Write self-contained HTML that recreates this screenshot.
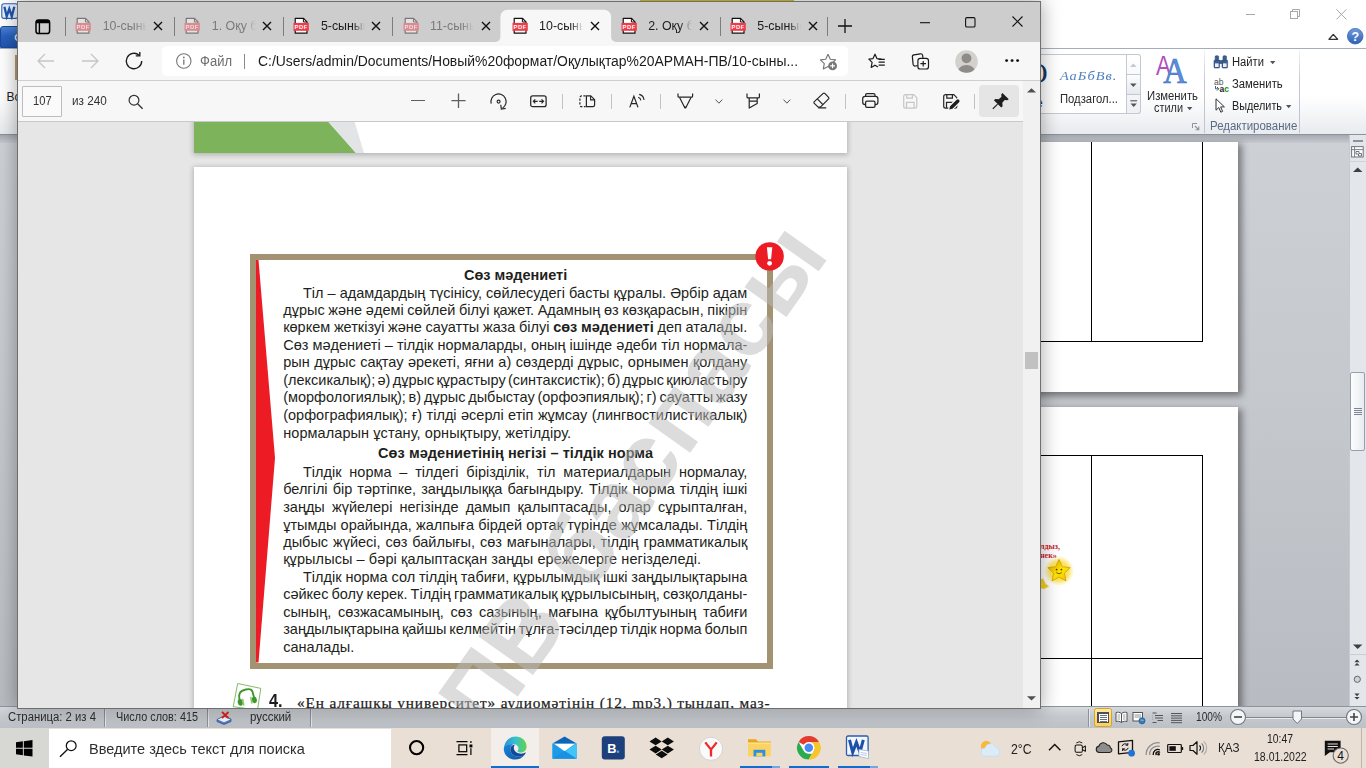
<!DOCTYPE html>
<html><head><meta charset="utf-8"><title>screen</title>
<style>
*{box-sizing:border-box;margin:0;padding:0}
html,body{width:1366px;height:768px;overflow:hidden;background:#fff;font-family:"Liberation Sans",sans-serif}
.a{position:absolute}
.t{position:absolute;white-space:nowrap;line-height:1;display:inline-block}
svg{position:absolute;overflow:visible}
/* ---------- WORD ---------- */
#word{position:absolute;left:0;top:0;width:1366px;height:728px;background:#fff;overflow:hidden}
#wdoc{position:absolute;left:0;top:142px;width:1349px;height:565px;background:linear-gradient(#cdd0d5,#c5c8cd 45%,#b8bbc1)}
.wpage{position:absolute;background:#fff;box-shadow:3px 3px 7px 1px rgba(0,0,0,.42)}
#wstatus{position:absolute;left:0;top:706px;width:1366px;height:22px;background:linear-gradient(#d6dade,#c5c9ce 45%,#bcc1c7);border-top:1px solid #8e949c}
/* ---------- EDGE ---------- */
#edge{position:absolute;left:17px;top:1px;width:1024px;height:708px;background:#e6e6e6;border:1px solid #6e6e6e;box-shadow:0 0 18px 1px rgba(0,0,0,.33);overflow:hidden}
#etabs{position:absolute;left:18px;top:2px;width:1022px;height:40px;background:#cdcdcd}
#eaddr{position:absolute;left:18px;top:42px;width:1022px;height:39px;background:#f7f7f7;border-bottom:1px solid #cfcfcf}
#epdfbar{position:absolute;left:18px;top:81px;width:1005px;height:41px;background:#f7f7f7;border-bottom:1px solid #c9c9c9}
#escroll{position:absolute;left:1023px;top:81px;width:17px;height:627px;background:#f1f1f1}
#eview{position:absolute;left:0;top:0;width:1023px;height:708px;background:#e6e6e6;overflow:hidden;clip-path:inset(122px 0 0 18px)}
.pg{background:#fff;box-shadow:0 1px 5px 1px rgba(0,0,0,.22)}
.l{font-size:14.5px;line-height:20px;height:20px;color:#231f20}
.tt{top:19.3px;font-size:12.4px;line-height:14px;width:44px;overflow:hidden;-webkit-mask-image:linear-gradient(90deg,#000 72%,transparent 100%);mask-image:linear-gradient(90deg,#000 72%,transparent 100%)}
#wm{left:488.65px;top:654.5px;font-size:97px;font-weight:bold;color:rgba(185,185,185,.5);transform:rotate(-54.7deg);transform-origin:0 82.1px;word-spacing:7px}
/* ---------- TASKBAR ---------- */
#task{position:absolute;left:0;top:728px;width:1366px;height:40px;background:#eadfd5}
</style></head><body>

<div id="word">
  <div id="wdoc"></div>
<div class="a" style="left:640px;top:0;width:154px;height:1.3px;background:#d8c422"></div>
<svg width="18" height="17" style="left:1px;top:2.5px"><rect x=".8" y=".8" width="16" height="14.6" rx="2.2" fill="#eaf1fb" stroke="#2f62b3" stroke-width="1.1"></rect><path d="M3.4 3.8l2.3 9.6 2.6-7.6 2.5 7.6 2.5-9.6" fill="none" stroke="#1e56b0" stroke-width="2.3"></path></svg>
<div class="a" style="left:0;top:25.5px;width:30px;height:22.8px;background:linear-gradient(#4c83d6,#2a62c0 45%,#1f55b1);border-radius:3px 3px 0 0;border:1px solid #1b4a9c"></div>
<div class="t" style="left:14px;top:31px;font-size:13px;color:#fff">Ф</div>
<div class="a" style="left:1245.5px;top:13.8px;width:9.8px;height:1px;background:#a8a8a8"></div>
<svg width="12" height="12" style="left:1290px;top:8.8px"><rect x=".5" y="2.5" width="7" height="7" fill="#fff" stroke="#a8a8a8" stroke-width="1"></rect><path d="M2.5 2.5V.5h7v7h-2" fill="none" stroke="#a8a8a8" stroke-width="1"></path></svg>
<svg width="12" height="12" style="left:1335.5px;top:8.8px"><path d="M.4 .4l10 10M10.4 .4l-10 10" stroke="#a8a8a8" stroke-width="1"></path></svg>
<svg width="12" height="8" style="left:1328px;top:32.8px"><path d="M1 6.3L5.3 1.4l4.3 4.9z" fill="#fff" stroke="#333" stroke-width="1.3" stroke-linejoin="round"></path></svg>
<svg width="17" height="17" style="left:1347px;top:28.2px"><defs><linearGradient id="hg" x1="0" y1="0" x2="0" y2="1"><stop offset="0" stop-color="#6f9bdc"></stop><stop offset="1" stop-color="#2f62b6"></stop></linearGradient></defs><circle cx="8.2" cy="8.2" r="7.8" fill="url(#hg)" stroke="#2c5aa6" stroke-width=".7"></circle><text x="8.2" y="12.6" font-family="Liberation Sans" font-weight="bold" font-size="12.5" fill="#fff" text-anchor="middle">?</text></svg>
<div class="a" style="left:0;top:48px;width:1366px;height:86.5px;background:linear-gradient(#fff 0,#fff 55%,#e8ebef 100%);border-top:1px solid #a4adbb;border-bottom:1px solid #8d929a"></div>
<div class="a" style="left:15.3px;top:55px;width:4px;height:25px;background:#b99b6b"></div>
<div class="t" style="left:6.5px;top:91px;font-size:12px;color:#222">Вс</div>
<div class="a" style="left:1000px;top:54px;width:141px;height:60px;background:#fff;border:1px solid #c3c9d3;border-radius:0 3px 3px 0"></div>
<div class="a" style="left:1126px;top:54px;width:15px;height:60px;border:1px solid #c3c9d3;border-radius:0 3px 3px 0;background:linear-gradient(#fff,#eef0f4)"></div>
<div class="a" style="left:1126px;top:74px;width:15px;height:20.5px;border:1px solid #c3c9d3;background:linear-gradient(#fdfdfe,#e6e9ee)"></div>
<svg width="7" height="5" style="left:1130px;top:62.5px"><path d="M0 4L3.3 .5 6.6 4z" fill="#c5c9cf"></path></svg>
<svg width="7" height="5" style="left:1130px;top:82.5px"><path d="M0 .5L3.3 4 6.6 .5z" fill="#555"></path></svg>
<svg width="8" height="9" style="left:1129.5px;top:99.5px"><path d="M.3 .8h6.8" stroke="#555" stroke-width="1.1"></path><path d="M.5 3.4L3.7 7 6.9 3.4z" fill="#555"></path></svg>
<div class="t" style="left:1026px;top:58px;font-family:'Liberation Serif',serif;font-size:30px;color:#17365d">О</div>
<div class="t" style="left:1036px;top:97px;font-size:12px;color:#17365d">е</div>
<div class="t" style="left: 1059.5px; top: 67px; font-family: &quot;Liberation Serif&quot;, serif; font-style: italic; font-size: 13.5px; line-height: 18px; color: rgb(79, 129, 189); letter-spacing: 1px; transform-origin: left center; transform: scaleX(1.0642);">АаБбВв.</div>
<div class="t" style="left: 1059.5px; top: 91.5px; font-size: 12px; line-height: 14px; color: rgb(42, 42, 42); transform-origin: left center; transform: scaleX(0.9393);">Подзагол...</div>
<svg width="34" height="32" style="left:1156px;top:53px"><text x="0" y="22" font-family="Liberation Sans" font-size="27" fill="#b24fbe" transform="translate(0 0) scale(.82 1)">A</text><text x="0" y="30" font-family="Liberation Serif" font-size="36" fill="#5b8fdc" stroke="#3f72c4" stroke-width=".7" transform="translate(7.300 0) scale(.9 1)">A</text></svg>
<div class="t" style="left: 1146.9px; top: 88.5px; font-size: 12.5px; line-height: 14px; color: rgb(42, 42, 42); transform-origin: left center; transform: scaleX(0.9044);">Изменить</div>
<div class="t" style="left: 1153.7px; top: 101.3px; font-size: 12.5px; line-height: 14px; color: rgb(42, 42, 42); transform-origin: left center; transform: scaleX(0.8726);">стили</div>
<svg width="6" height="4" style="left:1186.5px;top:107px"><path d="M0 0h5.4L2.7 3.2z" fill="#555"></path></svg>
<svg width="8" height="8" style="left:1192px;top:123px"><path d="M.5 5V.5H5" fill="none" stroke="#8b939f" stroke-width="1"></path><path d="M3 3l3.6 3.6M6.8 3.6v3.2H3.6" fill="none" stroke="#8b939f" stroke-width="1.1"></path></svg>
<div class="a" style="left:1204.0px;top:50px;width:1px;height:83px;background:linear-gradient(rgba(190,197,208,.2),#bfc6d0 40%,#bfc6d0)"></div>
<div class="a" style="left:1298.8px;top:50px;width:1px;height:83px;background:linear-gradient(rgba(190,197,208,.2),#bfc6d0 40%,#bfc6d0)"></div>
<svg width="16" height="14" style="left:1213px;top:55px"><g fill="#3d5f8f" stroke="#2b4a78" stroke-width=".6"><rect x="1" y="5" width="5.6" height="8" rx="1"></rect><rect x="9" y="5" width="5.6" height="8" rx="1"></rect><rect x="2.2" y=".8" width="3.4" height="4.6" rx=".8"></rect><rect x="10" y=".8" width="3.4" height="4.6" rx=".8"></rect><rect x="6.4" y="5.6" width="2.8" height="3"></rect></g><rect x="2" y="8.4" width="3.6" height="3.6" fill="#e9eef6"></rect><rect x="10" y="8.4" width="3.6" height="3.6" fill="#e9eef6"></rect></svg>
<div class="t" style="left: 1232.2px; top: 55px; font-size: 12.5px; line-height: 14px; color: rgb(34, 34, 34); transform-origin: left center; transform: scaleX(0.8971);">Найти</div>
<svg width="6" height="4" style="left:1269.6px;top:60.5px"><path d="M0 0h5.4L2.7 3.2z" fill="#555"></path></svg>
<svg width="18" height="14" style="left:1212.5px;top:77.5px"><text x="1" y="6.5" font-family="Liberation Sans" font-size="8.5" fill="#555">ab</text><text x="6.5" y="13.6" font-family="Liberation Sans" font-weight="bold" font-size="8.5" fill="#222">a<tspan fill="#1d8a1d">c</tspan></text><path d="M2.5 8v2.8h3M4 9l1.8 1.8L4 12.6" fill="none" stroke="#3a5f9a" stroke-width="1"></path></svg>
<div class="t" style="left: 1232.2px; top: 77.2px; font-size: 12.5px; line-height: 14px; color: rgb(34, 34, 34); transform-origin: left center; transform: scaleX(0.9026);">Заменить</div>
<svg width="12" height="16" style="left:1215px;top:98px"><path d="M1 .8v11.4l2.8-2.6 2 4.6 1.8-.8-2-4.5h3.8z" fill="#fff" stroke="#333" stroke-width="1" stroke-linejoin="round"></path></svg>
<div class="t" style="left: 1232.2px; top: 99px; font-size: 12.5px; line-height: 14px; color: rgb(34, 34, 34); transform-origin: left center; transform: scaleX(0.867);">Выделить</div>
<svg width="6" height="4" style="left:1285.6px;top:104.5px"><path d="M0 0h5.4L2.7 3.2z" fill="#555"></path></svg>
<div class="t" style="left: 1209.6px; top: 118.6px; font-size: 12.5px; line-height: 14px; color: rgb(91, 107, 132); transform-origin: left center; transform: scaleX(0.9167);">Редактирование</div>
<div class="a" style="left:0;top:135px;width:1349px;height:8px;background:linear-gradient(#a6aab0,#c6cad0)"></div>
<div class="a wpage" style="left:900px;top:142px;width:337.6px;height:250px"></div>
<div class="a wpage" style="left:900px;top:407px;width:337.6px;height:310px"></div>
<div class="a" style="left:1091px;top:142px;width:1.3px;height:200px;background:#000"></div>
<div class="a" style="left:1091px;top:455.5px;width:1.3px;height:260px;background:#000"></div>
<div class="a" style="left:1202px;top:142px;width:1.3px;height:200px;background:#000"></div>
<div class="a" style="left:1202px;top:455.5px;width:1.3px;height:260px;background:#000"></div>
<div class="a" style="left:900px;top:340.8px;width:303.3px;height:1px;background:#000"></div>
<div class="a" style="left:900px;top:455.3px;width:303.3px;height:1px;background:#000"></div>
<div class="a" style="left:900px;top:657.6px;width:303.3px;height:1px;background:#000"></div>
<svg width="34" height="34" style="left:1042px;top:554px"><defs><linearGradient id="sf" x1="0" y1="0" x2="1" y2="1"><stop offset="0" stop-color="#d99a00"></stop><stop offset=".55" stop-color="#ffe600"></stop><stop offset="1" stop-color="#f0b400"></stop></linearGradient><radialGradient id="sg"><stop offset="0" stop-color="#fff6a0"></stop><stop offset=".6" stop-color="#fbe25a"></stop><stop offset="1" stop-color="#fbe25a" stop-opacity="0"></stop></radialGradient></defs><circle cx="17" cy="17" r="15" fill="url(#sg)"></circle><path d="M17 5.5l3.4 7.2 7.8 1-5.7 5.4 1.4 7.8L17 23.100l-6.900 3.800 1.400-7.800-5.700-5.400 7.800-1z" fill="url(#sf)" stroke="#c9920a" stroke-width=".7"></path><circle cx="14.6" cy="15.600" r=".9" fill="#5a3a00"></circle><circle cx="19.400" cy="15.600" r=".9" fill="#5a3a00"></circle><path d="M14.300 18.600q2.700 2.400 5.400 0" stroke="#5a3a00" stroke-width=".8" fill="none"></path></svg>
<svg width="14" height="14" style="left:1036px;top:577px"><path d="M1 3l6-1.500 2.500 5 3.500 3-5 2.500-4-1 1.500-4z" fill="#f6d21c"></path></svg>
<div class="t" style="left:1040px;top:542.500px;font-family:'Liberation Serif',serif;font-weight:bold;font-size:8px;color:#d0202a">лдыз,</div>
<div class="t" style="left:1040px;top:551.500px;font-family:'Liberation Serif',serif;font-weight:bold;font-size:8px;color:#d0202a">нек»</div>
<div class="a" style="left:1349px;top:135px;width:17px;height:572px;background:#e3e6ea;border-left:1px solid #c5cad1"></div>
<div class="a" style="left:1352.5px;top:140.3px;width:10px;height:1.6px;background:#8c929b"></div>
<svg width="14" height="13" style="left:1351px;top:145.5px"><rect x=".6" y=".6" width="11.6" height="10.4" fill="#fdfdfd" stroke="#6f7782" stroke-width="1"></rect><path d="M.6 3.6h11.600M3.600 .6v10.400" stroke="#6f7782" stroke-width=".9"></path><path d="M5 5.500h3v2h2.500v2.500h-3v-2H5z" fill="none" stroke="#555" stroke-width=".8"></path></svg>
<div class="a" style="left:1349px;top:160.5px;width:17px;height:1px;background:#cfd3d9"></div>
<svg width="10" height="6" style="left:1352.600px;top:167px"><path d="M0 5L4.700 .4 9.400 5z" fill="#3c3f44"></path></svg>
<div class="a" style="left:1349.500px;top:372px;width:15.500px;height:78.500px;background:linear-gradient(90deg,#fdfdfe,#e8ebef);border:1px solid #98a0ab;border-radius:2px"></div>
<div class="a" style="left:1354px;top:407.5px;width:7.500px;height:1px;background:#7c848f"></div>
<div class="a" style="left:1354px;top:409.7px;width:7.500px;height:1px;background:#7c848f"></div>
<div class="a" style="left:1354px;top:411.9px;width:7.500px;height:1px;background:#7c848f"></div>
<div class="a" style="left:1354px;top:414.1px;width:7.500px;height:1px;background:#7c848f"></div>
<svg width="10" height="6" style="left:1352.600px;top:643.500px"><path d="M0 .4L4.700 5 9.400 .4z" fill="#3c3f44"></path></svg>
<div class="a" style="left:1349px;top:654px;width:17px;height:1px;background:#c9cdd4"></div><svg width="8" height="9" style="left:1354.300px;top:658.500px"><path d="M.4 3.300L3 .6 5.600 3.300zM.4 6.600L3 3.900 5.600 6.600z" fill="#3c3f44"></path></svg>
<svg width="9" height="9" style="left:1353px;top:675px"><circle cx="4.300" cy="4.300" r="3.100" fill="#cfd2d7" stroke="#666" stroke-width="1"></circle></svg>
<svg width="8" height="9" style="left:1354.300px;top:693px"><path d="M.4 .6L3 3.300 5.600 .6zM.4 3.900L3 6.600 5.600 3.900z" fill="#3c3f44"></path></svg>
  <div id="wstatus"></div>
<div class="t" style="left: 8.2px; top: 709.7px; font-size: 12.5px; line-height: 14px; color: rgb(45, 45, 45); transform-origin: left center; transform: scaleX(0.9056);">Страница: 2 из 4</div>
<div class="a" style="left:104.4px;top:709px;width:1px;height:18px;background:#8d939b"></div><div class="a" style="left:105.4px;top:709px;width:1px;height:18px;background:#e4e7eb"></div>
<div class="t" style="left: 115.7px; top: 709.7px; font-size: 12.5px; line-height: 14px; color: rgb(45, 45, 45); transform-origin: left center; transform: scaleX(0.8676);">Число слов: 415</div>
<div class="a" style="left:206.9px;top:709px;width:1px;height:18px;background:#8d939b"></div><div class="a" style="left:207.9px;top:709px;width:1px;height:18px;background:#e4e7eb"></div>
<svg width="18" height="14" style="left:216px;top:710.5px"><path d="M1 8.500l7-3.500 7 3v2.500l-7 3-7-3z" fill="#4d7cc4" stroke="#2b4f8e" stroke-width=".7"></path><path d="M1.500 8.500l6.500 2.700 6.500-2.700L8 5.700z" fill="#f3f6fb"></path><path d="M6 1l6.500 6M12.500 1L6 7" stroke="#e0251b" stroke-width="1.800"></path></svg>
<div class="t" style="left: 249.5px; top: 709.7px; font-size: 12.5px; line-height: 14px; color: rgb(45, 45, 45); transform-origin: left center; transform: scaleX(0.9207);">русский</div>
<div class="a" style="left:310.3px;top:709px;width:1px;height:18px;background:#8d939b"></div><div class="a" style="left:311.3px;top:709px;width:1px;height:18px;background:#e4e7eb"></div>
<div class="a" style="left:1087.8px;top:709px;width:1px;height:18px;background:#8d939b"></div><div class="a" style="left:1088.8px;top:709px;width:1px;height:18px;background:#e4e7eb"></div>
<div class="a" style="left:1093.500px;top:708.300px;width:18.300px;height:18.300px;background:linear-gradient(#fde9a4,#f9cf5f);border:1px solid #d9a327;border-radius:2.500px"></div>
<svg width="14" height="14" style="left:1097px;top:711px" shape-rendering="crispEdges"><rect x=".75" y="1.750" width="10.500" height="9.500" fill="#fff" stroke="#4a4f57" stroke-width="1.500"></rect><path d="M2.500 4h7M2.500 6h7M2.500 8h7M2.500 10h7" stroke="#6b7078" stroke-width="1"></path></svg>
<svg width="14" height="14" style="left:1115.0px;top:710.500px"><path d="M6.500 2.500C4.500 1 2.500 1 1 1.600v9c1.500-.6 3.500-.6 5.500.9 2-1.500 4-1.500 5.500-.9v-9C10.500 1 8.500 1 6.500 2.500zM6.500 2.500v9" fill="#fff" stroke="#555" stroke-width="1"></path><path d="M2.500 4h2.500M2.500 6h2.500M2.500 8h2.500M8 4h2.500M8 6h2.500M8 8h2.500" stroke="#777" stroke-width=".7"></path></svg>
<svg width="14" height="14" style="left:1132.1px;top:710.500px"><rect x="1" y="1.500" width="9.500" height="8.500" fill="#fff" stroke="#555" stroke-width="1"></rect><path d="M2.500 4h6.500M2.500 6h6.500" stroke="#777" stroke-width=".8"></path><circle cx="10" cy="9.800" r="3.100" fill="#3a78c9" stroke="#1d4f91" stroke-width=".6"></circle><path d="M8.500 9.200c1-.8 2 .8 3 0" stroke="#7fce5a" stroke-width="1.100" fill="none"></path></svg>
<svg width="14" height="14" style="left:1150.6px;top:710.500px"><path d="M1.500 2h4M4 4.500h8M4 7h8M6.500 9.500h5.500M1.500 11.500h4" stroke="#555" stroke-width="1"></path><path d="M1.500 4v5.500" stroke="#999" stroke-width=".7" stroke-dasharray="1 1"></path></svg>
<svg width="14" height="14" style="left:1169.5px;top:710.500px"><path d="M1 2.500h11M1 4.800h11M1 7.100h11M1 9.400h11M1 11.700h11" stroke="#555" stroke-width="1"></path></svg>
<div class="t" style="left: 1195.5px; top: 709.7px; font-size: 12.5px; line-height: 14px; color: rgb(45, 45, 45); transform-origin: left center; transform: scaleX(0.8129);">100%</div>
<div class="a" style="left:1246px;top:716.500px;width:100px;height:1px;background:#7e858e"></div><div class="a" style="left:1246px;top:717.500px;width:100px;height:1px;background:#e9ecef"></div>
<svg width="18" height="18" style="left:1228.500px;top:708.300px"><circle cx="9" cy="9" r="7.500" fill="#f4f5f7" stroke="#6f7782" stroke-width="1.100"></circle><path d="M5 9h8" stroke="#444" stroke-width="1.600"></path></svg>
<svg width="18" height="18" style="left:1344.500px;top:708.300px"><circle cx="9" cy="9" r="7.500" fill="#f4f5f7" stroke="#6f7782" stroke-width="1.100"></circle><path d="M5 9h8M9 5v8" stroke="#444" stroke-width="1.600"></path></svg>
<svg width="11" height="15" style="left:1291.600px;top:709.600px"><path d="M1 1h8.500v8L5.200 13.500 1 9z" fill="#f4f5f7" stroke="#6f7782" stroke-width="1"></path></svg>
</div>

<div id="edge"><div class="a" id="ep" style="left:-18px;top:-2px;width:1366px;height:768px">
  <!-- all children below are in PAGE coordinates -->
  <div id="eview">
    <!-- previous page bottom -->
    <div class="a pg" style="left:194px;top:100px;width:653px;height:53px">
      <svg width="653" height="53" style="left:0;top:0"><polygon points="0,0 115,0 162,53 0,53" fill="#7db35a"></polygon><polygon points="115,0 154,0 170,53 162,53" fill="#e3e4e6"></polygon></svg>
    </div>
    <!-- current page -->
    <div class="a pg" id="pgB" style="left:194px;top:167px;width:653px;height:600px"></div>
    <!-- info box -->
    <div class="a" style="left:250px;top:254px;width:523px;height:414.5px;border:6px solid #a39373;background:#fff"></div>
    <svg width="30" height="410" style="left:255px;top:259px"><polygon points="1,1 3.5,1 20,199 3.5,403.5 1,403.5" fill="#ed1c24"></polygon></svg>
<div class="t l" style="left: 464px; top: 265px; font-weight: bold; letter-spacing: -0.009px;">Сөз мәдениеті</div>
<div class="t l" style="left: 303px; top: 283px; word-spacing: -0.002px;">Тіл – адамдардың түсінісу, сөйлесудегі басты құралы. Әрбір адам</div>
<div class="t l" style="left: 283.2px; top: 300px; word-spacing: -0.336px;">дұрыс және әдемі сөйлей білуі қажет. Адамның өз көзқарасын, пікірін</div>
<div class="t l" style="left: 283.2px; top: 317px; word-spacing: -0.324px;">көркем жеткізуі және сауатты жаза білуі <b>сөз мәдениеті</b> деп аталады.</div>
<div class="t l" style="left: 283.2px; top: 335px; word-spacing: 0.112px;">Сөз мәдениеті – тілдік нормаларды, оның ішінде әдеби тіл нормала-</div>
<div class="t l" style="left: 283.2px; top: 352px; word-spacing: 0.478px;">рын дұрыс сақтау әрекеті, яғни а) сөздерді дұрыс, орнымен қолдану</div>
<div class="t l" style="left: 283.2px; top: 370px; word-spacing: -1.731px;">(лексикалық); ә) дұрыс құрастыру (синтаксистік); б) дұрыс қиюластыру</div>
<div class="t l" style="left: 283.2px; top: 387px; word-spacing: -1.225px;">(морфологиялық); в) дұрыс дыбыстау (орфоэпиялық); г) сауатты жазу</div>
<div class="t l" style="left: 283.2px; top: 405px; word-spacing: 0.433px;">(орфографиялық); ғ) тілді әсерлі етіп жұмсау (лингвостилистикалық)</div>
<div class="t l" style="left: 283.2px; top: 423px; letter-spacing: 0.078px;">нормаларын ұстану, орнықтыру, жетілдіру.</div>
<div class="t l" style="left: 378.1px; top: 443px; font-weight: bold; letter-spacing: 0.056px;">Сөз мәдениетінің негізі – тілдік норма</div>
<div class="t l" style="left: 303px; top: 462px; word-spacing: 3.773px;">Тілдік норма – тілдегі бірізділік, тіл материалдарын нормалау,</div>
<div class="t l" style="left: 283.2px; top: 479px; word-spacing: 1.046px;">белгілі бір тәртіпке, заңдылыққа бағындыру. Тілдік норма тілдің ішкі</div>
<div class="t l" style="left: 283.2px; top: 497px; word-spacing: 3.108px;">заңды жүйелері негізінде дамып қалыптасады, олар сұрыпталған,</div>
<div class="t l" style="left: 283.2px; top: 515px; word-spacing: 0.202px;">ұтымды орайында, жалпыға бірдей ортақ түрінде жұмсалады. Тілдің</div>
<div class="t l" style="left: 283.2px; top: 532px; word-spacing: 0.867px;">дыбыс жүйесі, сөз байлығы, сөз мағыналары, тілдің грамматикалық</div>
<div class="t l" style="left: 283.2px; top: 549px; letter-spacing: 0.083px;">құрылысы – бәрі қалыптасқан заңды ережелерге негізделеді.</div>
<div class="t l" style="left: 303px; top: 567px; word-spacing: -0.162px;">Тілдік норма сол тілдің табиғи, құрылымдық ішкі заңдылықтарына</div>
<div class="t l" style="left: 283.2px; top: 584px; word-spacing: -0.929px;">сәйкес болу керек. Тілдің грамматикалық құрылысының, сөзқолданы-</div>
<div class="t l" style="left: 283.2px; top: 602px; word-spacing: 2.566px;">сының, сөзжасамының, сөз сазының, мағына құбылтуының табиғи</div>
<div class="t l" style="left: 283.2px; top: 619px; word-spacing: -1.197px;">заңдылықтарына қайшы келмейтін тұлға-тәсілдер тілдік норма болып</div>
<div class="t l" style="left: 283.2px; top: 637px; letter-spacing: 0.019px;">саналады.</div>
    <!-- exercise 4 line -->
    <svg width="40" height="40" viewBox="225 676 40 40" style="left:225px;top:676px"><path d="M237.700 683.500L260.800 688.400L257.500 710L233.200 706.700z" fill="#fff" stroke="#72b655" stroke-width=".9" stroke-linejoin="round"></path><path d="M239.500 699.500C238.400 693.300 239.800 690.900 245.800 689.500C250.200 688.500 251.900 689.600 252.500 691.700L253.800 696.600" fill="none" stroke="#3f962b" stroke-width="1.900" stroke-linecap="round"></path><ellipse cx="240.300" cy="702.400" rx="2.600" ry="3.400" fill="#3f962b" transform="rotate(-10 240.300 702.400)"></ellipse><rect x="242.300" y="698.600" width="1.700" height="7.200" rx=".8" fill="#8fca7a" transform="rotate(-10 243 702)"></rect><ellipse cx="254.300" cy="699.900" rx="2.600" ry="3.300" fill="#3f962b" transform="rotate(-10 254.300 699.900)"></ellipse><rect x="250.500" y="696.700" width="1.700" height="7" rx=".8" fill="#8fca7a" transform="rotate(-10 251.300 700.200)"></rect></svg>
<div class="t" style="left: 268.9px; top: 691.4px; font-size: 19px; font-weight: bold; line-height: 19px; color: rgb(28, 28, 28); transform-origin: left center; transform: scaleX(0.8575);">4.</div>
<div class="t" style="left: 297px; top: 694.3px; font-family: &quot;Liberation Serif&quot;, serif; font-size: 15.3px; line-height: 18px; color: rgb(28, 28, 28); -webkit-text-stroke: 0.22px rgb(28, 28, 28); letter-spacing: 0.863px;">«Ең алғашқы университет» аудиомәтінін (12. mp3.) тыңдап, маз-</div>

    <!-- watermark -->
    <div class="t" id="wm">ПВ баспасы</div>
    <!-- red exclamation -->
    <svg width="30" height="30" style="left:754.5px;top:242px"><circle cx="14.6" cy="14.4" r="14.2" fill="#ed1c24"></circle><path d="M11.9 5.2h5.4l-1.2 12h-3z" fill="#fff"></path><circle cx="14.6" cy="21.3" r="2.4" fill="#fff"></circle></svg>
  </div>
  <div id="etabs"></div>
<svg width="130" height="34" style="left:492px;top:9px"><path d="M3.4 33 a5 5 0 0 0 5 -5 V7.8 a7 7 0 0 1 7 -7 H112.1 a7 7 0 0 1 7 7 V28 a5 5 0 0 0 5 5 z" fill="#f7f7f7"></path></svg>
<svg width="17" height="18" style="left:75.2px;top:17px"><g opacity=".45"><path d="M2.200 1.400h8.400l3.400 3.400v11.400H2.200z" fill="#fff" stroke="#111" stroke-width="1.200" stroke-linejoin="round"></path><path d="M10.400 1.600v3.400h3.400" fill="none" stroke="#111" stroke-width="1"></path><rect x="0.5" y="5.9" width="15.3" height="7.9" fill="#f03a47"></rect><text x="8.15" y="12.1" font-family="Liberation Sans" font-weight="bold" font-size="5.9" fill="#fff" text-anchor="middle" letter-spacing=".55">PDF</text></g></svg>
<div class="t tt" style="left:102.7px;color:#7a7a7a">10-сынып</div>
<svg width="10" height="10" style="left:153.2px;top:21.3px"><path d="M1 1l8 8M9 1l-8 8" stroke="#111" stroke-width="1.35" fill="none"></path></svg>
<svg width="17" height="18" style="left:184.3px;top:17px"><g opacity=".45"><path d="M2.200 1.400h8.400l3.400 3.400v11.400H2.200z" fill="#fff" stroke="#111" stroke-width="1.200" stroke-linejoin="round"></path><path d="M10.400 1.600v3.400h3.400" fill="none" stroke="#111" stroke-width="1"></path><rect x="0.5" y="5.9" width="15.3" height="7.9" fill="#f03a47"></rect><text x="8.15" y="12.1" font-family="Liberation Sans" font-weight="bold" font-size="5.9" fill="#fff" text-anchor="middle" letter-spacing=".55">PDF</text></g></svg>
<div class="t tt" style="left:211.8px;color:#7a7a7a">1. Оқу бөлім</div>
<svg width="10" height="10" style="left:262.3px;top:21.3px"><path d="M1 1l8 8M9 1l-8 8" stroke="#111" stroke-width="1.35" fill="none"></path></svg>
<svg width="17" height="18" style="left:293.4px;top:17px"><g><path d="M2.200 1.400h8.400l3.400 3.400v11.400H2.200z" fill="#fff" stroke="#111" stroke-width="1.200" stroke-linejoin="round"></path><path d="M10.400 1.600v3.400h3.400" fill="none" stroke="#111" stroke-width="1"></path><rect x="0.5" y="5.9" width="15.3" height="7.9" fill="#f03a47"></rect><text x="8.15" y="12.1" font-family="Liberation Sans" font-weight="bold" font-size="5.9" fill="#fff" text-anchor="middle" letter-spacing=".55">PDF</text></g></svg>
<div class="t tt" style="left:320.9px;color:#1b1b1b">5-сынып</div>
<svg width="10" height="10" style="left:371.4px;top:21.3px"><path d="M1 1l8 8M9 1l-8 8" stroke="#111" stroke-width="1.35" fill="none"></path></svg>
<svg width="17" height="18" style="left:402.5px;top:17px"><g opacity=".45"><path d="M2.200 1.400h8.400l3.400 3.400v11.400H2.200z" fill="#fff" stroke="#111" stroke-width="1.200" stroke-linejoin="round"></path><path d="M10.400 1.600v3.400h3.400" fill="none" stroke="#111" stroke-width="1"></path><rect x="0.5" y="5.9" width="15.3" height="7.9" fill="#f03a47"></rect><text x="8.15" y="12.1" font-family="Liberation Sans" font-weight="bold" font-size="5.9" fill="#fff" text-anchor="middle" letter-spacing=".55">PDF</text></g></svg>
<div class="t tt" style="left:430.0px;color:#7a7a7a">11-сынып</div>
<svg width="10" height="10" style="left:480.5px;top:21.3px"><path d="M1 1l8 8M9 1l-8 8" stroke="#111" stroke-width="1.35" fill="none"></path></svg>
<svg width="17" height="18" style="left:511.6px;top:17px"><g><path d="M2.200 1.400h8.400l3.400 3.400v11.400H2.200z" fill="#fff" stroke="#111" stroke-width="1.200" stroke-linejoin="round"></path><path d="M10.400 1.600v3.400h3.400" fill="none" stroke="#111" stroke-width="1"></path><rect x="0.5" y="5.9" width="15.3" height="7.9" fill="#f03a47"></rect><text x="8.15" y="12.1" font-family="Liberation Sans" font-weight="bold" font-size="5.9" fill="#fff" text-anchor="middle" letter-spacing=".55">PDF</text></g></svg>
<div class="t tt" style="left:539.1px;color:#1b1b1b">10-сынып</div>
<svg width="10" height="10" style="left:589.6px;top:21.3px"><path d="M1 1l8 8M9 1l-8 8" stroke="#111" stroke-width="1.35" fill="none"></path></svg>
<svg width="17" height="18" style="left:620.7px;top:17px"><g><path d="M2.200 1.400h8.400l3.400 3.400v11.400H2.200z" fill="#fff" stroke="#111" stroke-width="1.200" stroke-linejoin="round"></path><path d="M10.400 1.600v3.400h3.400" fill="none" stroke="#111" stroke-width="1"></path><rect x="0.5" y="5.9" width="15.3" height="7.9" fill="#f03a47"></rect><text x="8.15" y="12.1" font-family="Liberation Sans" font-weight="bold" font-size="5.9" fill="#fff" text-anchor="middle" letter-spacing=".55">PDF</text></g></svg>
<div class="t tt" style="left:648.2px;color:#1b1b1b">2. Оқу бөлім</div>
<svg width="10" height="10" style="left:698.7px;top:21.3px"><path d="M1 1l8 8M9 1l-8 8" stroke="#111" stroke-width="1.35" fill="none"></path></svg>
<svg width="17" height="18" style="left:729.8px;top:17px"><g><path d="M2.200 1.400h8.400l3.400 3.400v11.400H2.200z" fill="#fff" stroke="#111" stroke-width="1.200" stroke-linejoin="round"></path><path d="M10.400 1.600v3.400h3.400" fill="none" stroke="#111" stroke-width="1"></path><rect x="0.5" y="5.9" width="15.3" height="7.9" fill="#f03a47"></rect><text x="8.15" y="12.1" font-family="Liberation Sans" font-weight="bold" font-size="5.9" fill="#fff" text-anchor="middle" letter-spacing=".55">PDF</text></g></svg>
<div class="t tt" style="left:757.3px;color:#1b1b1b">5-сынып</div>
<svg width="10" height="10" style="left:807.8px;top:21.3px"><path d="M1 1l8 8M9 1l-8 8" stroke="#111" stroke-width="1.35" fill="none"></path></svg>
<div class="a" style="left:64.9px;top:17px;width:1px;height:19px;background:#7d7d7d"></div>
<div class="a" style="left:174.0px;top:17px;width:1px;height:19px;background:#7d7d7d"></div>
<div class="a" style="left:283.1px;top:17px;width:1px;height:19px;background:#7d7d7d"></div>
<div class="a" style="left:392.2px;top:17px;width:1px;height:19px;background:#7d7d7d"></div>
<div class="a" style="left:719.5px;top:17px;width:1px;height:19px;background:#7d7d7d"></div>
<div class="a" style="left:827.1px;top:17px;width:1px;height:19px;background:#7d7d7d"></div>
<svg width="16" height="16" style="left:34.5px;top:18.5px"><rect x="1" y="1" width="13.6" height="13.6" rx="2.6" fill="none" stroke="#000" stroke-width="1.5"></rect><path d="M1 4.2V3.2a2.3 2.3 0 0 1 2.3 -2.3h9a2.3 2.3 0 0 1 2.3 2.3v1z" fill="#000"></path><path d="M4.4 4v10.5" stroke="#000" stroke-width="1.4"></path></svg>
<svg width="16" height="16" style="left:837.3px;top:18.3px"><path d="M8 1v14M1 8h14" stroke="#111" stroke-width="1.3"></path></svg>
<svg width="12" height="2" style="left:920px;top:21.6px"><path d="M0 .7h10" stroke="#111" stroke-width="1.1"></path></svg>
<svg width="12" height="12" style="left:965.4px;top:16.9px"><rect x=".6" y=".6" width="9.4" height="9.4" rx="1.3" fill="none" stroke="#111" stroke-width="1.1"></rect></svg>
<svg width="12" height="12" style="left:1011.6px;top:16.4px"><path d="M.5 .5l10 10M10.5 .5l-10 10" stroke="#111" stroke-width="1.1"></path></svg>
  <div id="eaddr"></div>
<div class="a" style="left:162px;top:46px;width:686px;height:30px;background:#fff;border-radius:5px"></div>
<svg width="18" height="16" style="left:37px;top:52.5px"><path d="M17 8H1.2M8 1L1 8l7 7" stroke="#c6c6c6" stroke-width="1.3" fill="none"></path></svg>
<svg width="18" height="16" style="left:81px;top:52.5px"><path d="M1 8h15.8M10 1l7 7-7 7" stroke="#c6c6c6" stroke-width="1.3" fill="none"></path></svg>
<svg width="20" height="20" style="left:124px;top:51px"><path d="M17.7 10a7.7 7.7 0 1 1 -2.6 -5.75" stroke="#1b1b1b" stroke-width="1.35" fill="none"></path><path d="M15.8 .9v4h-4" stroke="#1b1b1b" stroke-width="1.35" fill="none"></path></svg>
<svg width="18" height="18" style="left:175px;top:52px"><circle cx="8.8" cy="9" r="7.2" fill="none" stroke="#767676" stroke-width="1.1"></circle><path d="M8.8 7.6v5.2" stroke="#767676" stroke-width="1.3"></path><circle cx="8.8" cy="5.4" r=".9" fill="#767676"></circle></svg>
<div class="t" style="left: 200.4px; top: 52.5px; font-size: 14px; line-height: 16px; color: rgb(110, 110, 110); transform-origin: left center; transform: scaleX(0.9296);">Файл</div>
<div class="a" style="left:244.3px;top:53.5px;width:1px;height:15px;background:#8a8a8a"></div>
<div class="t" style="left: 257.6px; top: 52.5px; font-size: 14px; line-height: 16px; color: rgb(27, 27, 27); transform-origin: left center; transform: scaleX(0.9944);">C:/Users/admin/Documents/Новый%20формат/Оқулықтар%20АРМАН-ПВ/10-сыны...</div>
<svg width="20" height="18" style="left:819px;top:52.5px"><path d="M9 1.3l2.3 4.9 5.3.7-3.9 3.7.3 1.2M9 1.3L6.7 6.2l-5.3.7 3.9 3.7-1 5.3L9 13.4l1.2.6" fill="none" stroke="#767676" stroke-width="1.15" stroke-linejoin="round"></path><circle cx="13.6" cy="12.9" r="4.4" fill="#767676"></circle><path d="M13.6 10.5v4.8M11.2 12.9h4.8" stroke="#fff" stroke-width="1.1"></path></svg>
<svg width="20" height="18" style="left:867.5px;top:52.5px"><path d="M7 1.2l1.9 4.4 4.2.5M7 1.2L5 5.6.9 6.2l3.2 3.2-.9 5 3.8-2.2 2.6 1.5" fill="none" stroke="#1b1b1b" stroke-width="1.2" stroke-linejoin="round" stroke-linecap="round"></path><path d="M10.6 6.3h6.2M10.6 9.2h6.2M10.6 12.1h6.2" stroke="#1b1b1b" stroke-width="1.2"></path></svg>
<svg width="20" height="18" style="left:911.5px;top:52.5px"><path d="M5.6 12.6l-2.2.4a2 2 0 0 1 -2.3 -1.6L.4 4.2A2 2 0 0 1 2 1.9L8.3.8a2 2 0 0 1 2.3 1.6l.4 2.4" fill="none" stroke="#1b1b1b" stroke-width="1.2"></path><rect x="5.9" y="5.4" width="10.6" height="10.6" rx="2.3" fill="#f7f7f7" stroke="#1b1b1b" stroke-width="1.2"></rect><path d="M11.2 7.9v5.6M8.4 10.7H14" stroke="#1b1b1b" stroke-width="1.2"></path></svg>
<svg width="24" height="24" style="left:954.5px;top:49.5px"><defs><clipPath id="pc"><circle cx="11.5" cy="11.5" r="11.3"></circle></clipPath></defs><circle cx="11.5" cy="11.5" r="11.3" fill="#d3d1ce"></circle><g clip-path="url(#pc)" fill="#8e8b88"><circle cx="11.5" cy="8.3" r="4.9"></circle><ellipse cx="11.5" cy="21.6" rx="8.6" ry="6.6"></ellipse></g></svg>
<svg width="16" height="4" style="left:1005px;top:59px"><circle cx="1.6" cy="1.6" r="1.45" fill="#111"></circle><circle cx="7.1" cy="1.6" r="1.45" fill="#111"></circle><circle cx="12.6" cy="1.6" r="1.45" fill="#111"></circle></svg>
  <div id="epdfbar"></div>
<div class="a" style="left:22px;top:85.5px;width:40px;height:31.5px;border:1px solid #bdbdbd;background:#fafafa;border-radius:1px"></div>
<div class="t" style="left: 33.2px; top: 94px; font-size: 12.5px; line-height: 15px; color: rgb(51, 51, 51); transform-origin: left center; transform: scaleX(0.8917);">107</div>
<div class="t" style="left: 72.3px; top: 94px; font-size: 12.5px; line-height: 15px; color: rgb(51, 51, 51); transform-origin: left center; transform: scaleX(0.9394);">из 240</div>
<svg width="16" height="16" style="left:127.5px;top:93.5px"><circle cx="6" cy="6.2" r="4.9" fill="none" stroke="#333" stroke-width="1.2"></circle><path d="M9.6 9.8l5 5" stroke="#333" stroke-width="1.3"></path></svg>
<div class="a" style="left:411px;top:100.2px;width:14.2px;height:1.3px;background:#5f5f5f"></div>
<svg width="16" height="16" style="left:450.5px;top:93.3px"><path d="M7.5 .5v14.4M.4 7.6h14.2" stroke="#5f5f5f" stroke-width="1.3"></path></svg>
<svg width="20" height="20" style="left:488.5px;top:91.5px"><path d="M2.2 11.6A7.6 7.6 0 1 1 13.6 16" fill="none" stroke="#262626" stroke-width="1.2"></path><path d="M16.6 16.9h-4.4v-4.3" fill="none" stroke="#262626" stroke-width="1.2" transform="rotate(-8 13 16)"></path><circle cx="9.6" cy="9.6" r="1.5" fill="none" stroke="#262626" stroke-width="1.1"></circle></svg>
<svg width="18" height="14" style="left:530px;top:94.5px"><rect x=".7" y=".9" width="15.4" height="10.8" rx="2" fill="none" stroke="#262626" stroke-width="1.25"></rect><path d="M3.4 6.3h9.8M5.3 4.3l-2 2 2 2M11.5 4.3l2 2-2 2" fill="none" stroke="#262626" stroke-width="1.15"></path><path d="M7.6 6.3h1.6" stroke="#f7f7f7" stroke-width="1.6"></path></svg>
<div class="a" style="left:561.8px;top:93.5px;width:1px;height:15.5px;background:#c2c2c2"></div>
<div class="a" style="left:610.6px;top:93.5px;width:1px;height:15.5px;background:#c2c2c2"></div>
<div class="a" style="left:659.7px;top:93.5px;width:1px;height:15.5px;background:#c2c2c2"></div>
<div class="a" style="left:844.8px;top:93.5px;width:1px;height:15.5px;background:#c2c2c2"></div>
<div class="a" style="left:973.8px;top:93.5px;width:1px;height:15.5px;background:#c2c2c2"></div>
<svg width="18" height="14" style="left:579px;top:94.5px"><path d="M6.6 .9H2.6A1.7 1.7 0 0 0 .9 2.6v7.4a1.7 1.7 0 0 0 1.7 1.7h4" fill="none" stroke="#262626" stroke-width="1.2" stroke-dasharray="2.2 1.5"></path><path d="M7.4 .9h4.4l3.8 3.8v5.3a1.7 1.7 0 0 1 -1.7 1.7H7.4z" fill="none" stroke="#262626" stroke-width="1.2" stroke-linejoin="round"></path><path d="M11.6 1v3.9h3.9" fill="none" stroke="#262626" stroke-width="1.1"></path></svg>
<svg width="18" height="16" style="left:628.5px;top:92.5px"><path d="M.8 14.4L4.9 3.3 9 14.4M2.3 10.6h5.2" fill="none" stroke="#262626" stroke-width="1.2"></path><path d="M9.2 4.2a3.6 3.6 0 0 1 2.6 3.2M10.2 1.4a6.4 6.4 0 0 1 4.8 5.6" fill="none" stroke="#262626" stroke-width="1.1"></path></svg>
<svg width="18" height="17" style="left:676.5px;top:92.8px"><path d="M1 .6v2.6a1 1 0 0 0 1 1h12.6a1 1 0 0 0 1 -1V.6" fill="none" stroke="#262626" stroke-width="1.2"></path><path d="M2.6 4.4l5.2 10.4h1l5.2-10.4" fill="none" stroke="#262626" stroke-width="1.2" stroke-linejoin="round"></path><path d="M7.1 13.4h2.4l-.7 1.6h-1z" fill="#262626"></path></svg>
<svg width="9" height="6" style="left:715px;top:98.8px"><path d="M.5 .6l3.4 3.6L7.3.6" fill="none" stroke="#555" stroke-width="1"></path></svg>
<svg width="16" height="17" style="left:745.5px;top:92.8px"><path d="M1 .6v3.3a1 1 0 0 0 1 1h10.4a1 1 0 0 0 1 -1V.6" fill="none" stroke="#262626" stroke-width="1.2"></path><path d="M3.2 5v3.2M11.2 5v3.2M3.2 8.2h8v2.2l-8 4.6z" fill="none" stroke="#262626" stroke-width="1.2" stroke-linejoin="round"></path></svg>
<svg width="9" height="6" style="left:783px;top:98.8px"><path d="M.5 .6l3.4 3.6L7.3.6" fill="none" stroke="#555" stroke-width="1"></path></svg>
<svg width="18" height="18" style="left:812.5px;top:92px"><path d="M1.3 9.6L10.2 1.4a1.2 1.2 0 0 1 1.6 0l3.8 3.9a1.2 1.2 0 0 1 0 1.6L7.4 15.2H5.2L1.3 11.3a1.2 1.2 0 0 1 0 -1.7z" fill="none" stroke="#262626" stroke-width="1.2" stroke-linejoin="round"></path><path d="M4.3 6.9l5.6 5.7M5.2 15.8h8" fill="none" stroke="#262626" stroke-width="1.2"></path></svg>
<svg width="18" height="16" style="left:861.6px;top:93.2px"><rect x="3.6" y=".7" width="9.4" height="4" rx="1.4" fill="none" stroke="#262626" stroke-width="1.25"></rect><rect x=".7" y="3.4" width="15.2" height="8.3" rx="2.4" fill="#f7f7f7" stroke="#262626" stroke-width="1.25"></rect><rect x="3.6" y="8" width="9.4" height="6.4" rx="1.4" fill="#f7f7f7" stroke="#262626" stroke-width="1.25"></rect></svg>
<svg width="18" height="16" style="left:902.8px;top:93.6px"><path d="M.7 2.6A1.9 1.9 0 0 1 2.6.7h8.2l3 3v8.6a1.9 1.9 0 0 1 -1.9 1.9H2.6A1.9 1.9 0 0 1 .7 12.3z" fill="none" stroke="#c6c6c6" stroke-width="1.2"></path><path d="M3.8.8v3.4h5.6V.8M3.5 14.1V8.4h7.6v5.7" fill="none" stroke="#c6c6c6" stroke-width="1.2"></path></svg>
<svg width="18" height="16" style="left:942.6px;top:93.6px"><path d="M.7 2.6A1.9 1.9 0 0 1 2.6.7h8.2l3 3v8.6a1.9 1.9 0 0 1 -1.9 1.9H2.6A1.9 1.9 0 0 1 .7 12.3z" fill="none" stroke="#262626" stroke-width="1.2"></path><path d="M3.8.8v3.4h5.6V.8M3.5 14.1V8.4h7.6v5.7" fill="none" stroke="#262626" stroke-width="1.2"></path><path d="M6.200 15.600l.900-3.300 6.600-6.500a1.700 1.700 0 0 1 2.400 2.400l-6.600 6.500z" fill="#f7f7f7" stroke="#f7f7f7" stroke-width="2.600"></path><path d="M6.200 15.600l.900-3.300 6.600-6.500a1.700 1.700 0 0 1 2.400 2.400l-6.600 6.500z" fill="#1d1d1d"></path></svg>
<div class="a" style="left:979.3px;top:85px;width:39.7px;height:31.8px;background:#e5e5e5;border-radius:4px"></div>
<svg width="18" height="18" style="left:991.5px;top:91.5px"><path d="M10.4.9l6.4 6.4-1.7 1-2.4-.3-2.4 2.8.3 3.4-1.4 1.4L1.9 8.3 3.3 6.9l3.4.3 2.8-2.4-.3-2.4z" fill="#1d1d1d"></path><path d="M5.6 12.1L.8 16.9" stroke="#1d1d1d" stroke-width="1.2"></path></svg>
  <div id="escroll"></div>
<svg width="10" height="6" style="left:1027px;top:88.2px"><path d="M0 4.6L4.5 .2 9 4.6z" fill="#505050"></path></svg>
<svg width="10" height="6" style="left:1027px;top:696px"><path d="M0 .2L4.5 4.6 9 .2z" fill="#505050"></path></svg>
<div class="a" style="left:1025px;top:352px;width:13px;height:17px;background:#c1c1c1"></div>
</div></div>

<div id="task"><div class="a" style="left:0;top:-728px;width:1366px;height:768px">
<div class="a" style="left:0;top:728px;width:48.600px;height:40px;background:#d7d8d4"></div>
<svg width="16.600" height="16.600" viewBox="0 0 17.400 17.400" style="left:15.700px;top:739.500px"><path d="M0 2.400L7.200 1.400V8.200H0zM8.200 1.250L17.300 0V8.200H8.200zM0 9.200H7.200V16L0 15zM8.200 9.200H17.300V17.400L8.200 16.150z" fill="#000"></path></svg>
<div class="a" style="left:48.600px;top:728.700px;width:342.900px;height:39.300px;background:#fff"></div>
<svg width="20" height="20" style="left:59px;top:738.500px"><circle cx="12.200" cy="6.700" r="4.900" fill="none" stroke="#111" stroke-width="1.250"></circle><path d="M8.700 10.200L1 17.800" stroke="#111" stroke-width="1.350"></path></svg>
<div class="t" style="left: 88.7px; top: 739.5px; font-size: 15px; line-height: 18px; color: rgb(46, 46, 46); transform-origin: left center; transform: scaleX(0.9678);">Введите здесь текст для поиска</div>
<svg width="18" height="18" style="left:407.500px;top:739.300px"><circle cx="8.600" cy="8.600" r="6.600" fill="none" stroke="#000" stroke-width="2.100"></circle></svg>
<svg width="20" height="18" style="left:455.500px;top:739.500px"><rect x="2.900" y="4.900" width="7.800" height="6.800" fill="none" stroke="#000" stroke-width="1.200"></rect><path d="M.5 1.700h11M.5 14.700h11" stroke="#000" stroke-width="1.200"></path><path d="M14.900 .9v2.200M14.900 8.300v6.800" stroke="#000" stroke-width="1.200"></path><rect x="13.500" y="4.500" width="2.900" height="2.900" fill="#000"></rect></svg>
<div class="a" style="left:490.800px;top:728px;width:48.600px;height:40px;background:#f4eeea"></div>
<div class="a" style="left:490.800px;top:765.500px;width:48.600px;height:2.500px;background:#0a6fd1"></div>
<svg width="24" height="24" viewBox="0 0 24 24" style="left:502.900px;top:735.800px"><defs><linearGradient id="eg1" x1="0" y1="0" x2="1" y2="0"><stop offset="0" stop-color="#2b8fdc"></stop><stop offset=".5" stop-color="#35c1d0"></stop><stop offset="1" stop-color="#63d345"></stop></linearGradient><linearGradient id="eg2" x1="0" y1="0" x2="1" y2="1"><stop offset="0" stop-color="#1b86dd"></stop><stop offset="1" stop-color="#0c55a5"></stop></linearGradient></defs>
<path d="M.9 12.500C1.300 5.500 6.500 .4 12.500 .4c6.500 0 11.100 4.900 11.100 10 0 3.600-2.600 6.100-6 6.100-2.100 0-3.200-.8-3.200-1.600 0-.7 1.100-1 1.100-2.500C15.500 10 13 7.900 10 7.900c-4.600 0-8.300 3.300-9.100 6.900z" fill="url(#eg1)"></path>
<path d="M.9 12.500C.4 18.500 5.800 23.600 12.300 23.600c3.600 0 6.900-1.700 8.900-4.300-1.500.9-3.400 1.500-5.200 1.500-5 0-8.700-3.400-8.700-7.500 0-2.500 1.500-4.500 3.100-5.300C5.400 7.700 1.200 10.800.9 12.500z" fill="url(#eg2)"></path>
<path d="M7.300 13.300c0 4.100 3.700 7.500 8.700 7.500 1.800 0 3.700-.6 5.200-1.500.8-1 1.400-2.100 1.700-3-1.300.9-3 1.400-4.600 1.400-4.300 0-7.500-2.500-7.500-5.900 0-1.400.5-2.500 1.200-3.300-2.700.1-4.700 2.100-4.700 4.800z" fill="#0d4a98"></path></svg>
<svg width="26" height="24" style="left:551.500px;top:736px"><path d="M.5 7.500L12.600 .6l12.100 6.900z" fill="#0f63b8"></path><rect x=".5" y="7.500" width="24.200" height="15.200" fill="#2aa3ec"></rect><path d="M2.500 7.900h20.200L12.600 15.200z" fill="#fff"></path><path d="M.5 7.500l12.100 8.300L.5 22.700z" fill="#1f9ae8"></path><path d="M24.700 7.500l-12.100 8.300 12.100 6.900z" fill="#3fc6f6"></path><path d="M.5 22.700l12.100-8 12.100 8z" fill="#1b8fe2"></path></svg>
<svg width="26" height="24" style="left:600.500px;top:736px"><rect x=".8" y=".3" width="23" height="23.200" rx="3" fill="#1d3f7c"></rect><text x="6.300" y="16.700" font-family="Liberation Sans" font-weight="bold" font-size="12.800" fill="#fff">B</text><circle cx="17" cy="15.800" r="1.300" fill="#3ab7ea"></circle></svg>
<svg width="26" height="22" style="left:649px;top:737px"><g fill="#0d0d0d"><path d="M6.600 .5l6.100 3.900-6.100 3.900L.5 4.400zM18.800 .5l6.100 3.900-6.100 3.900-6.100-3.900zM6.600 8.700l6.100 3.900-6.100 3.900L.5 12.600zM18.800 8.700l6.100 3.900-6.100 3.900-6.100-3.900zM6.700 17.500l6-3.800 6 3.800-6 3.800z"></path></g></svg>
<svg width="26" height="26" style="left:698px;top:735.500px"><circle cx="13" cy="12.800" r="11.600" fill="#fafafa" stroke="#d6d2cf" stroke-width="1"></circle><path d="M7.300 6.400l5.700 7.200v6.800M18.700 6.400L13 13.600" fill="none" stroke="#ee2a2a" stroke-width="2.300"></path></svg>
<svg width="26" height="22" style="left:747px;top:737px"><path d="M1 2.200h8l2 2.400h12.800v3H1z" fill="#e9a81b"></path><path d="M1 5.600h22.800V19.400H1z" fill="#fbd362"></path><path d="M1 5.600h22.800v1.600H1z" fill="#fce08a"></path><path d="M6.500 19.400v-6.600h11.800v6.600z" fill="#2c8fe3"></path><path d="M9.300 19.400v-3.600h6.200v3.600z" fill="#fbd362"></path></svg>
<svg width="26" height="26" style="left:796px;top:734.500px"><circle cx="12.800" cy="12.800" r="11.800" fill="#fff"></circle><path d="M12.800 1a11.800 11.800 0 0 1 10.220 5.900H12.800a5.900 5.900 0 0 0 -5.110 2.950L2.580 6.900A11.800 11.800 0 0 1 12.800 1z" fill="#e33b2e"></path><path d="M23.020 6.900a11.800 11.800 0 0 1 -10.220 17.700l5.110-8.850a5.900 5.900 0 0 0 0 -5.900z" fill="#f7c52f" transform="rotate(0 12.800 12.800)"></path><path d="M12.800 24.600A11.800 11.800 0 0 1 2.580 6.900l5.110 8.850a5.900 5.900 0 0 0 5.110 2.950l3.100 0z" fill="#2da94f"></path><path d="M17.910 15.750L12.800 24.600a11.800 11.800 0 0 0 10.220-17.700H12.800a5.900 5.900 0 0 1 5.110 8.850z" fill="#f7c52f"></path><circle cx="12.800" cy="12.800" r="5.300" fill="#fff"></circle><circle cx="12.800" cy="12.800" r="4.250" fill="#4a8af4"></circle></svg>
<svg width="26" height="26" style="left:844.500px;top:735px"><rect x="1.500" y="1" width="21.600" height="19.500" rx="1.500" fill="#f2f6fc" stroke="#2a5db0" stroke-width="1.300"></rect><path d="M4.500 4.800l3.200 12.400 3.700-9.800 3.600 9.800 3.300-12.400" fill="none" stroke="#1c4fa8" stroke-width="3"></path><path d="M14 14.500l9.500 1.500v7.500l-9.500-2z" fill="#fff" stroke="#9bb3d8" stroke-width=".8"></path><path d="M15.500 17.500l6.500 1M15.500 19.500l6.500 1" stroke="#9bb3d8" stroke-width=".7"></path></svg>
<div class="a" style="left:739.9px;top:765.500px;width:40.3px;height:2.500px;background:#0a6fd1"></div>
<div class="a" style="left:788.8px;top:765.500px;width:40.0px;height:2.500px;background:#0a6fd1"></div>
<div class="a" style="left:838.1px;top:765.500px;width:39.9px;height:2.500px;background:#0a6fd1"></div>
<div class="a" style="left:771.800px;top:765.500px;width:8.400px;height:2.500px;background:#6fa8e4"></div><div class="a" style="left:869.700px;top:765.500px;width:8.300px;height:2.500px;background:#6fa8e4"></div>
<svg width="24" height="20" style="left:978px;top:738.500px"><circle cx="8.300" cy="7.200" r="5.400" fill="#f9b83a"></circle><path d="M6.500 17.300a4.200 4.200 0 0 1 .5-8.350 5.600 5.600 0 0 1 10.600-.9 4.700 4.700 0 0 1 .6 9.250z" fill="#dcebf8" stroke="#bcd6ee" stroke-width=".6"></path></svg>
<div class="t" style="left: 1010.6px; top: 739.5px; font-size: 15px; line-height: 18px; color: rgb(34, 34, 34); transform-origin: left center; transform: scaleX(0.8179);">2°C</div>
<svg width="14" height="9" style="left:1048px;top:743px"><path d="M1 7.300L6.700 1.500l5.700 5.800" fill="none" stroke="#111" stroke-width="1.400"></path></svg>
<svg width="16" height="20" viewBox="-1.500 -1 19 22" style="left:1072.500px;top:738.500px"><rect x="1" y="5.200" width="8.600" height="8.800" rx="2" fill="none" stroke="#111" stroke-width="1.200"></rect><path d="M9.600 8.600l3.600-2.200v6.400l-3.600-2.200" fill="none" stroke="#111" stroke-width="1.200" stroke-linejoin="round"></path><path d="M2.500 2.800a5.600 5.600 0 0 1 7 0M2.500 16.600a5.600 5.600 0 0 0 7 0" fill="none" stroke="#111" stroke-width="1.100"></path></svg>
<svg width="18" height="12.600" viewBox="0 0 20 14" style="left:1094.500px;top:742px"><path d="M4.800 11.700a3.600 3.600 0 0 1 -.4-7.150A5 5 0 0 1 13.600 3.400a3.100 3.100 0 0 1 3.400 2.900 2.800 2.800 0 0 1 -.6 5.400z" fill="#8d8d8d" stroke="#222" stroke-width="1.200" stroke-linejoin="round"></path></svg>
<svg width="20" height="20" style="left:1117px;top:737.500px"><path d="M1.500 3.800l14-1.500v12l-14 1.500z" fill="none" stroke="#111" stroke-width="1.300" stroke-linejoin="round"></path><path d="M5 8.200a3.200 3.200 0 0 1 5.600-1.200M11.200 9.800a3.200 3.200 0 0 1 -5.600 1.200M10.800 5v2.200H8.600M5.600 13v-2.200h2.200" fill="none" stroke="#111" stroke-width="1"></path><circle cx="14.600" cy="15.200" r="3.400" fill="#1f72d8"></circle></svg>
<svg width="18" height="16" style="left:1143.500px;top:741px"><path d="M2.200 14A11.800 11.800 0 0 1 15.800 1.800" fill="none" stroke="#8e8e8e" stroke-width="1.300"></path><path d="M5.700 14A8.300 8.300 0 0 1 15.800 5.300" fill="none" stroke="#8e8e8e" stroke-width="1.300"></path><path d="M9.200 14a4.800 4.800 0 0 1 6.600-5.200" fill="none" stroke="#111" stroke-width="1.400"></path><path d="M12.400 14a2 2 0 0 1 3.400-2.300" fill="none" stroke="#111" stroke-width="1.400"></path><circle cx="14.600" cy="13.200" r="1.300" fill="#111"></circle></svg>
<svg width="18" height="12" style="left:1166.500px;top:742.500px"><rect x=".7" y="1.500" width="13.600" height="8" rx=".8" fill="none" stroke="#111" stroke-width="1.200"></rect><rect x="2.400" y="3.200" width="6.400" height="4.600" fill="#111"></rect><path d="M15.400 4v3" stroke="#111" stroke-width="1.500"></path></svg>
<svg width="20" height="16" style="left:1188.500px;top:740px"><path d="M1 5.500h3l4-3.800v12.600l-4-3.800H1z" fill="none" stroke="#111" stroke-width="1.200" stroke-linejoin="round"></path><path d="M10.500 5.500a3.500 3.500 0 0 1 0 5" fill="none" stroke="#111" stroke-width="1.100"></path><path d="M12.700 3.400a6.500 6.500 0 0 1 0 9.200" fill="none" stroke="#777" stroke-width="1.100"></path><path d="M14.900 1.400a9.300 9.300 0 0 1 0 13.200" fill="none" stroke="#aaa" stroke-width="1.100"></path></svg>
<div class="t" style="left: 1218px; top: 739.5px; font-size: 13px; line-height: 16px; color: rgb(34, 34, 34); transform-origin: left center; transform: scaleX(0.9018);">ҚАЗ</div>
<div class="t" style="left: 1266.7px; top: 730.5px; font-size: 13px; line-height: 16px; color: rgb(34, 34, 34); transform-origin: left center; transform: scaleX(0.7988);">10:47</div>
<div class="t" style="left: 1253.5px; top: 748.5px; font-size: 13px; line-height: 16px; color: rgb(34, 34, 34); transform-origin: left center; transform: scaleX(0.8098);">18.01.2022</div>
<svg width="26" height="26" style="left:1324px;top:739.500px"><path d="M.8 .8h15.800v11.400H5.800L.8 16z" fill="#111"></path><path d="M3.600 4h10.200M3.600 6.500h10.200M3.600 9h6.500" stroke="#eadfd5" stroke-width="1.100"></path><circle cx="16.700" cy="15.600" r="7.600" fill="#eadfd5" stroke="#6a6a6a" stroke-width="1.100"></circle><text x="16.700" y="20" font-family="Liberation Sans" font-size="12" fill="#111" text-anchor="middle">4</text></svg>
<div class="a" style="left:1361px;top:728px;width:1px;height:40px;background:#bdb4ae"></div>
</div></div>


</body></html>
